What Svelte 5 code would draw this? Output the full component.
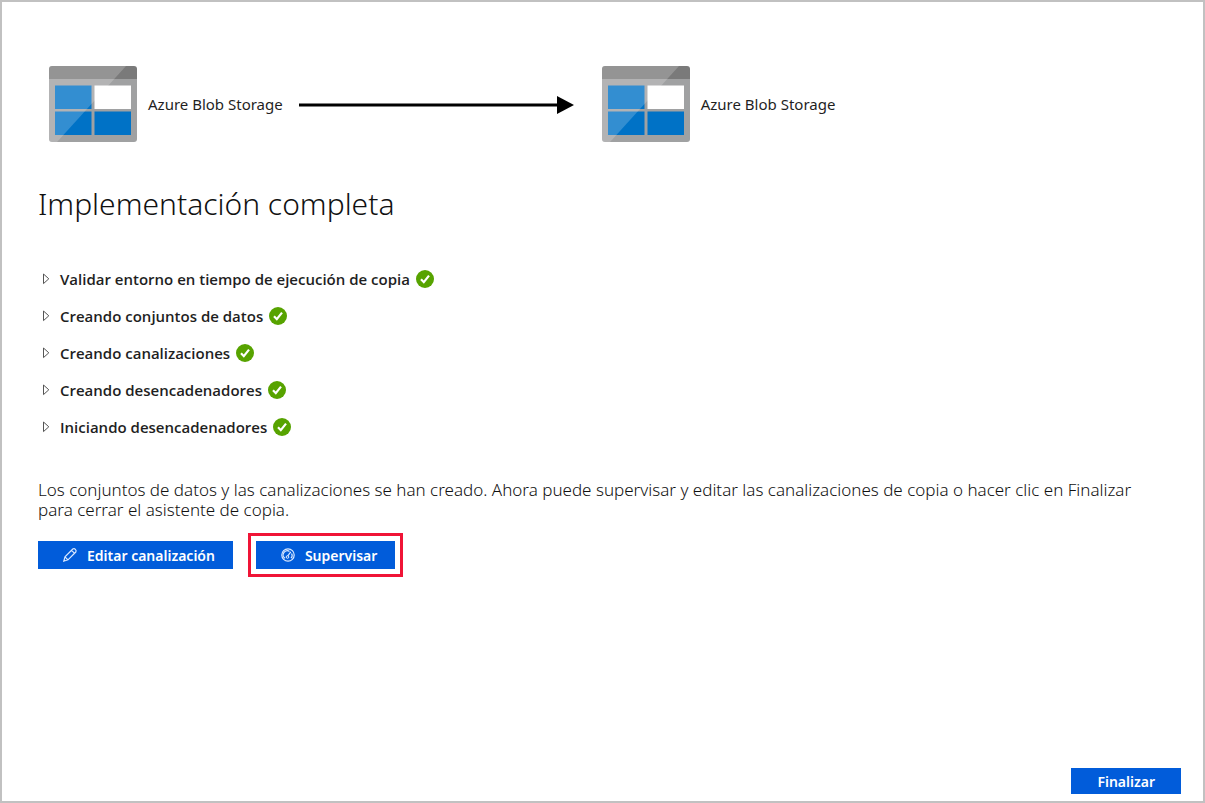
<script>
  const steps = [
    'Validar entorno en tiempo de ejecución de copia',
    'Creando conjuntos de datos',
    'Creando canalizaciones',
    'Creando desencadenadores',
    'Iniciando desencadenadores'
  ];
</script>

{#snippet blobIcon()}
  <svg class="blob" viewBox="0 0 90 78" width="90" height="78" aria-hidden="true">
    <path fill="#a0a1a2" d="M1 14h88v60q0 3-3 3H4q-3 0-3-3z" />
    <path fill="#7a7a7a" d="M4 1h82q3 0 3 3v10H1V4q0-3 3-3z" />
    <path fill="#0072c6" d="M7 20.5h36.5v23.5H7zM7 46.5h36.5v23.5H7zM46.5 46.5h36.5v23.5H46.5z" />
    <path fill="#fff" d="M46.5 20.5h36.5v23.5H46.5z" />
    <path fill="#fff" opacity=".2" d="M4 1h74L9 77H4q-3 0-3-3V4q0-3 3-3z" />
  </svg>
{/snippet}

<main>
  <div class="flow">
    <div class="node">{@render blobIcon()}<span>Azure Blob Storage</span></div>
    <svg class="arrow" viewBox="0 0 276 20" width="276" height="20" aria-hidden="true">
      <path d="M0 9.5h258v3H0z" />
      <path d="M258 2l17 9-17 9z" />
    </svg>
    <div class="node">{@render blobIcon()}<span>Azure Blob Storage</span></div>
  </div>

  <h1>Implementación completa</h1>

  <ul>
    {#each steps as step}
      <li>
        <button class="step" type="button" aria-expanded="false">
          <svg viewBox="0 0 8 12" width="8" height="12" aria-hidden="true">
            <path d="M1.5 1v9.6L6.8 5.8z" fill="none" stroke="#555" />
          </svg>
          <span>{step}</span>
        </button>
        <svg viewBox="0 0 18 18" width="18" height="18" aria-hidden="true">
          <circle cx="9" cy="9" r="9" fill="#57a300" />
          <path d="M5 9.3l2.8 2.9L13 5.6" fill="none" stroke="#fff" stroke-width="2.2" />
        </svg>
      </li>
    {/each}
  </ul>

  <p>
    Los conjuntos de datos y las canalizaciones se han creado. Ahora puede supervisar y editar las
    canalizaciones de copia o hacer clic en Finalizar para cerrar el asistente de copia.
  </p>

  <div class="actions">
    <button class="primary" type="button">
      <svg viewBox="0 0 16 16" width="16" height="16" aria-hidden="true">
        <path d="M1.8 14.2l1.2-4.4L10.8 2q1.3-1 2.6.3t.4 2.7L6 12.8zM9.6 3.4l3 3M3 9.8l3 3" fill="none" stroke="#dbe9ff" stroke-width="1.2" />
      </svg>
      Editar canalización
    </button>
    <div class="highlight">
      <button class="primary" type="button">
        <svg viewBox="0 0 16 16" width="16" height="16" aria-hidden="true">
          <circle cx="8" cy="8" r="6.2" fill="none" stroke="#dbe9ff" stroke-width="1.2" />
          <path d="M5 11.2A4 4 0 0 1 9.5 4.4M11.6 6.5A4 4 0 0 1 11 11.2M7.6 9.2L10.8 4.8" fill="none" stroke="#dbe9ff" stroke-width="1.2" />
          <circle cx="7.5" cy="10" r="1.3" fill="none" stroke="#dbe9ff" />
        </svg>
        Supervisar
      </button>
    </div>
  </div>

  <footer><button class="finish" type="button">Finalizar</button></footer>
</main>

<style>
  :global(body) {
    margin: 0;
  }
  main {
    box-sizing: border-box;
    min-height: 100vh;
    display: flex;
    flex-direction: column;
    padding: 63px 22px 7px 36px;
    border: 2px solid #c1c1c1;
    background: #fff;
    color: #1f1f1f;
    font-family: 'Noto Sans', 'Open Sans', sans-serif;
  }
  .flow {
    display: flex;
    align-items: center;
    gap: 16px;
    padding-left: 10px;
    font-size: 15px;
  }
  .node {
    display: flex;
    align-items: center;
    gap: 10px;
  }
  .flow .arrow {
    margin-right: 10px;
  }
  svg {
    display: block;
    flex: none;
  }
  h1 {
    margin: 39px 0 0;
    color: #111;
    font-size: 30px;
    font-weight: 300;
    line-height: 44px;
  }
  ul {
    margin: 34px 0 0;
    padding: 0;
    list-style: none;
  }
  li {
    display: flex;
    align-items: center;
    gap: 6px;
    height: 37px;
  }
  button {
    border: 0;
    font-family: inherit;
    font-weight: 600;
  }
  .step {
    display: flex;
    align-items: center;
    gap: 10px;
    padding: 0 0 0 4px;
    background: none;
    color: inherit;
    font-family: 'Open Sans', sans-serif;
    font-size: 15px;
  }
  p {
    margin: 35px 0 0;
    padding-right: 32px;
    color: #111;
    font-size: 17px;
    font-weight: 300;
    line-height: 20px;
  }
  .actions {
    display: flex;
    align-items: center;
    gap: 15px;
    margin-top: 13px;
  }
  .primary,
  .finish {
    display: flex;
    align-items: center;
    background: #015cda;
    color: #fff;
    font-size: 14px;
  }
  .primary {
    gap: 9px;
    height: 28px;
    padding: 0 18px 0 24px;
  }
  .highlight {
    padding: 5px;
    border: 3px solid #f01436;
  }
  footer {
    display: flex;
    justify-content: flex-end;
    margin-top: auto;
  }
  .finish {
    height: 26px;
    padding: 0 26px;
  }
</style>
